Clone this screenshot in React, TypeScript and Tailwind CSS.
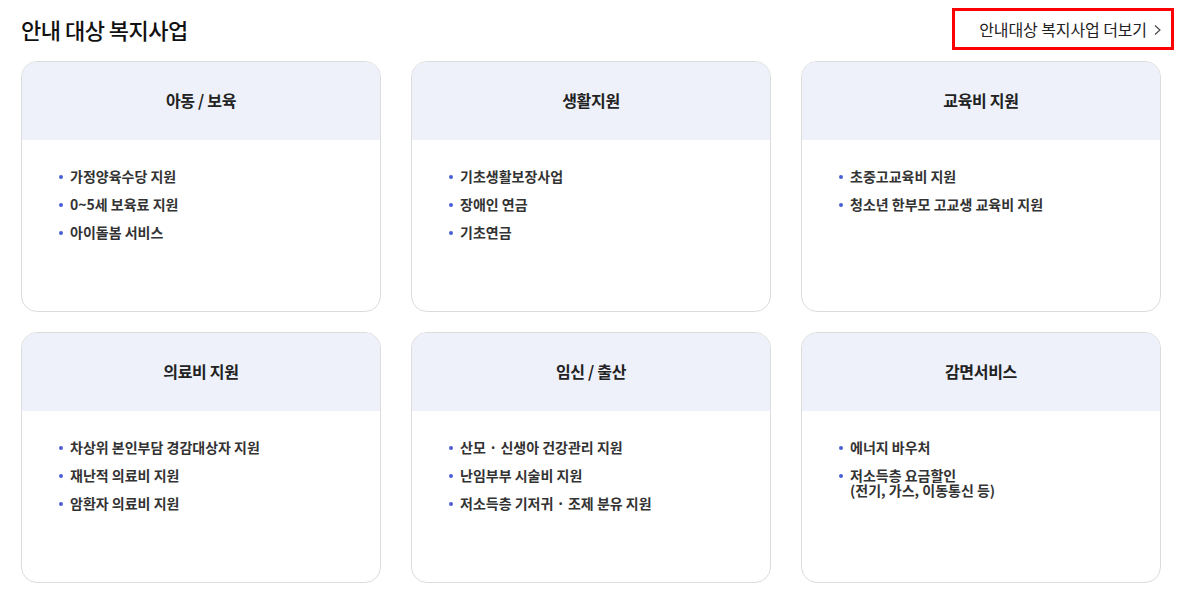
const font = { fontFamily: '"Noto Sans CJK KR", "Noto Sans", sans-serif' };

const categories = [
  { title: "아동 / 보육", items: ["가정양육수당 지원", "0~5세 보육료 지원", "아이돌봄 서비스"] },
  { title: "생활지원", items: ["기초생활보장사업", "장애인 연금", "기초연금"] },
  { title: "교육비 지원", items: ["초중고교육비 지원", "청소년 한부모 고교생 교육비 지원"] },
  { title: "의료비 지원", items: ["차상위 본인부담 경감대상자 지원", "재난적 의료비 지원", "암환자 의료비 지원"] },
  { title: "임신 / 출산", items: ["산모 · 신생아 건강관리 지원", "난임부부 시술비 지원", "저소득층 기저귀 · 조제 분유 지원"] },
  { title: "감면서비스", items: ["에너지 바우처", "저소득층 요금할인\n(전기, 가스, 이동통신 등)"] },
];

function Card({ title, items }: { title: string; items: string[] }) {
  return (
    <div className="h-[251px] border border-[#dcdcdc] rounded-[16px] overflow-hidden bg-white">
      <div className="h-[78px] bg-[#eef1fa] flex items-center justify-center pb-[3px]">
        <h3 className="text-[16px] font-bold text-[#222] tracking-[-0.3px]">{title}</h3>
      </div>
      <ul className="pt-[29px] pl-[37px] flex flex-col gap-[13px]">
        {items.map((it) => (
          <li key={it} className="relative pl-[11px] text-[14px] leading-[15px] font-semibold text-[#333] whitespace-pre-line">
            <span className="absolute left-0 top-[6px] w-[4px] h-[4px] rounded-full bg-[#4a5fd5]" />
            {it}
          </li>
        ))}
      </ul>
    </div>
  );
}

export default function App() {
  return (
    <div className="w-[1187px] h-[595px] bg-white px-[21px]" style={font}>
      <div className="flex items-center justify-between h-[61px]">
        <h2 className="text-[22px] font-medium text-[#111] tracking-[-0.5px] pb-[3px]">안내 대상 복지사업</h2>
        <a className="-mr-[8px] mt-[-3px] h-[42px] w-[222px] border-[3px] border-[#ff0000] flex items-center justify-end pr-[9px] text-[16px] text-[#222] tracking-[-0.1px]">
          안내대상 복지사업 더보기
          <svg width="9" height="12" viewBox="0 0 9 12" className="ml-[6px] mt-[2px]">
            <path d="M2 1.5 L7 6 L2 10.5" fill="none" stroke="#444" strokeWidth="1.1" />
          </svg>
        </a>
      </div>
      <div className="grid grid-cols-[360px_360px_360px] gap-x-[30px] gap-y-[20px]">
        {categories.map((c) => (
          <Card key={c.title} title={c.title} items={c.items} />
        ))}
      </div>
    </div>
  );
}
